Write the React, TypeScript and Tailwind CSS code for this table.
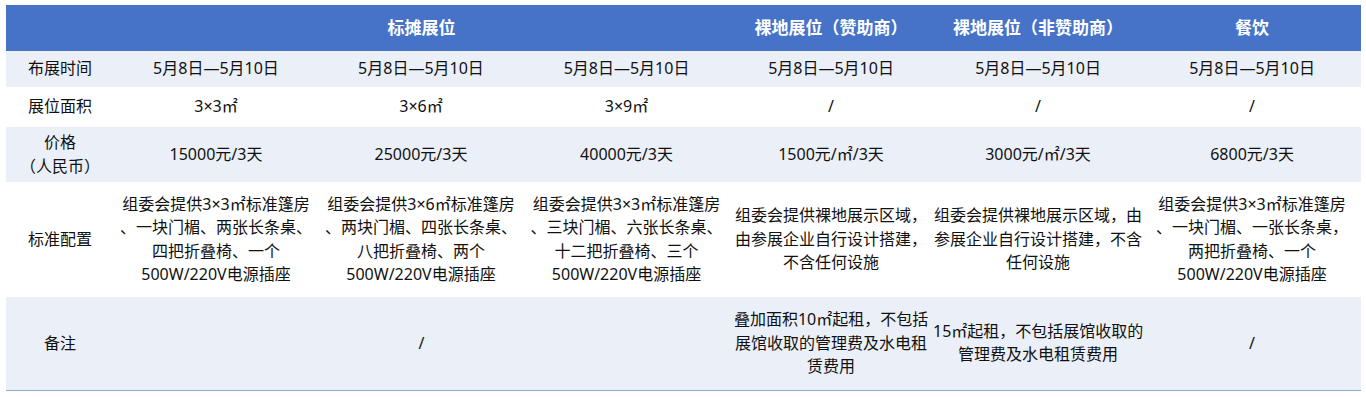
type Cell = {
  lines: string[];
  span?: number;
};

type Row = {
  label: string[];
  height: string;
  shaded: boolean;
  cells: Cell[];
};

const colWidths = [108, 204, 206, 205, 204, 210, 218];

const dates = "5月8日—5月10日";

const rows: Row[] = [
  {
    label: ["布展时间"],
    height: "h-[36px]",
    shaded: true,
    cells: Array.from({ length: 6 }, () => ({ lines: [dates] })),
  },
  {
    label: ["展位面积"],
    height: "h-[40px]",
    shaded: false,
    cells: [
      { lines: ["3×3㎡"] },
      { lines: ["3×6㎡"] },
      { lines: ["3×9㎡"] },
      { lines: ["/"] },
      { lines: ["/"] },
      { lines: ["/"] },
    ],
  },
  {
    label: ["价格", "（人民币）"],
    height: "h-[55px]",
    shaded: true,
    cells: [
      { lines: ["15000元/3天"] },
      { lines: ["25000元/3天"] },
      { lines: ["40000元/3天"] },
      { lines: ["1500元/㎡/3天"] },
      { lines: ["3000元/㎡/3天"] },
      { lines: ["6800元/3天"] },
    ],
  },
  {
    label: ["标准配置"],
    height: "h-[115px]",
    shaded: false,
    cells: [
      {
        lines: [
          "组委会提供3×3㎡标准篷房",
          "、一块门楣、两张长条桌、",
          "四把折叠椅、一个",
          "500W/220V电源插座",
        ],
      },
      {
        lines: [
          "组委会提供3×6㎡标准篷房",
          "、两块门楣、四张长条桌、",
          "八把折叠椅、两个",
          "500W/220V电源插座",
        ],
      },
      {
        lines: [
          "组委会提供3×3㎡标准篷房",
          "、三块门楣、六张长条桌、",
          "十二把折叠椅、三个",
          "500W/220V电源插座",
        ],
      },
      {
        lines: [
          "组委会提供裸地展示区域，",
          "由参展企业自行设计搭建，",
          "不含任何设施",
        ],
      },
      {
        lines: [
          "组委会提供裸地展示区域，由",
          "参展企业自行设计搭建，不含",
          "任何设施",
        ],
      },
      {
        lines: [
          "组委会提供3×3㎡标准篷房",
          "、一块门楣、一张长条桌，",
          "两把折叠椅、一个",
          "500W/220V电源插座",
        ],
      },
    ],
  },
  {
    label: ["备注"],
    height: "h-[93px]",
    shaded: true,
    cells: [
      { lines: ["/"], span: 3 },
      {
        lines: [
          "叠加面积10㎡起租，不包括",
          "展馆收取的管理费及水电租",
          "赁费用",
        ],
      },
      {
        lines: ["15㎡起租，不包括展馆收取的", "管理费及水电租赁费用"],
      },
      { lines: ["/"] },
    ],
  },
];

function Lines({ lines }: { lines: string[] }) {
  return (
    <>
      {lines.map((line, i) => (
        <span key={i} className="block whitespace-nowrap">
          {line}
        </span>
      ))}
    </>
  );
}

export default function App() {
  return (
    <main
      className="min-h-screen bg-white pt-[5px] pl-[6px]"
      style={{ fontFamily: '"Noto Sans", "Noto Sans CJK SC", sans-serif' }}
    >
      <table className="w-[1355px] table-fixed border-collapse border-b border-[#8eaadb] text-[16px] leading-[23.5px] text-[#111]">
        <colgroup>
          {colWidths.map((w, i) => (
            <col key={i} style={{ width: w }} />
          ))}
        </colgroup>
        <thead>
          <tr className="h-[46px] bg-[#4673c8] text-[17px] font-bold text-white">
            <th className="p-0" />
            <th colSpan={3} className="p-0 text-center align-middle">
              标摊展位
            </th>
            <th className="p-0 text-center align-middle whitespace-nowrap">
              裸地展位（赞助商）
            </th>
            <th className="p-0 text-center align-middle whitespace-nowrap">
              裸地展位（非赞助商）
            </th>
            <th className="p-0 text-center align-middle">餐饮</th>
          </tr>
        </thead>
        <tbody>
          {rows.map((row) => (
            <tr
              key={row.label.join("")}
              className={`${row.height} ${row.shaded ? "bg-[#eaeff8]" : "bg-white"}`}
            >
              <td className="p-0 text-center align-middle">
                <Lines lines={row.label} />
              </td>
              {row.cells.map((cell, i) => (
                <td
                  key={i}
                  colSpan={cell.span}
                  className="p-0 text-center align-middle"
                >
                  <Lines lines={cell.lines} />
                </td>
              ))}
            </tr>
          ))}
        </tbody>
      </table>
    </main>
  );
}
